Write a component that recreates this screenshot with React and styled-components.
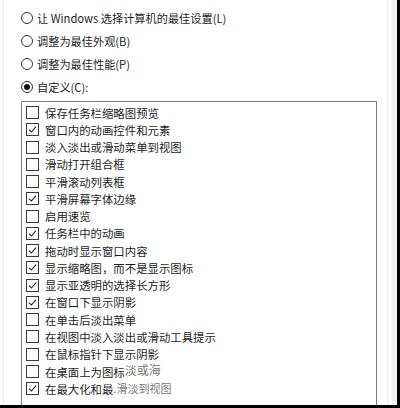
import React from 'react';
import styled, { createGlobalStyle } from 'styled-components';

const GlobalStyle = createGlobalStyle`
  html, body {
    margin: 0;
    padding: 0;
    background: #fff;
  }
  body {
    font-family: "Noto Sans CJK SC", "Noto Sans", sans-serif;
    color: #1e1e1e;
  }
`;

const Frame = styled.div`
  width: 400px;
  height: 408px;
  box-sizing: border-box;
  border-right: 3px solid #000;
  border-bottom: 3px solid #000;
  display: flex;
  overflow: hidden;
  background: #fff;
`;

const Panel = styled.div`
  flex: 1;
  margin-left: 3px;
  border-left: 1px solid #ececec;
  padding: 6px 0 0 17px;
  display: flex;
  flex-direction: column;
  min-width: 0;
`;

const EdgeStrip = styled.div`
  width: 9px;
  border-left: 1px solid #f0f0f0;
  background: linear-gradient(90deg, #f7f7f7 0, #fff 30%, #eeeeee 60%, #f6f6f6 100%);
`;

const RadioGroup = styled.div`
  display: flex;
  flex-direction: column;
`;

const RadioRow = styled.div`
  height: ${p => p.$h}px;
  display: flex;
  align-items: center;
  gap: 4px;
  font-size: 11.2px;
  white-space: nowrap;
`;

const RadioDot = styled.span`
  width: 10px;
  height: 10px;
  border: 1px solid #333;
  border-radius: 50%;
  display: flex;
  align-items: center;
  justify-content: center;
  flex-shrink: 0;

  &::after {
    content: '';
    width: 6px;
    height: 6px;
    border-radius: 50%;
    background: ${p => (p.$on ? '#111' : 'transparent')};
  }
`;

const ListBox = styled.div`
  margin-top: 2px;
  width: 356px;
  flex: 1;
  box-sizing: border-box;
  border: 1px solid #7f7f7f;
  border-bottom: none;
  padding: 2px 0 0 4px;
  display: flex;
  flex-direction: column;
`;

const Item = styled.div`
  height: 17.25px;
  display: flex;
  align-items: center;
  gap: 6px;
  font-size: 11.4px;
  white-space: nowrap;
`;

const Box = styled.span`
  width: 11px;
  height: 11px;
  border: 1px solid #3a3a3a;
  flex-shrink: 0;
  display: flex;
  align-items: center;
  justify-content: center;
`;

const Ghost = styled.span`
  color: #777;
  position: relative;
  top: ${p => p.$dy}px;
  font-size: ${p => p.$fs}px;
`;

const Check = () => (
  <svg width="9" height="9" viewBox="0 0 9 9">
    <path d="M1 4.6 L3.4 7 L8 1.6" fill="none" stroke="#222" strokeWidth="1.1" />
  </svg>
);

const radios = [
  { label: '让 Windows 选择计算机的最佳设置(L)', h: 24 },
  { label: '调整为最佳外观(B)', h: 22 },
  { label: '调整为最佳性能(P)', h: 23 },
  { label: '自定义(C):', h: 24, on: true },
];

const items = [
  { text: '保存任务栏缩略图预览' },
  { text: '窗口内的动画控件和元素', on: true },
  { text: '淡入淡出或滑动菜单到视图' },
  { text: '滑动打开组合框' },
  { text: '平滑滚动列表框' },
  { text: '平滑屏幕字体边缘', on: true },
  { text: '启用速览' },
  { text: '任务栏中的动画', on: true },
  { text: '拖动时显示窗口内容', on: true },
  { text: '显示缩略图，而不是显示图标', on: true },
  { text: '显示亚透明的选择长方形', on: true },
  { text: '在窗口下显示阴影', on: true },
  { text: '在单击后淡出菜单' },
  { text: '在视图中淡入淡出或滑动工具提示' },
  { text: '在鼠标指针下显示阴影' },
  { text: '在桌面上为图标', ghost: '淡或海', dy: -2, fs: 12 },
  { text: '在最大化和最', on: true, ghost: '.滑淡到视图', dy: -1, fs: 11 },
];

export default function App() {
  return (
    <>
      <GlobalStyle />
      <Frame>
        <Panel>
          <RadioGroup>
            {radios.map(r => (
              <RadioRow key={r.label} $h={r.h}>
                <RadioDot $on={r.on} />
                {r.label}
              </RadioRow>
            ))}
          </RadioGroup>
          <ListBox>
            {items.map(it => (
              <Item key={it.text}>
                <Box>{it.on && <Check />}</Box>
                <span>
                  {it.text}
                  {it.ghost && (
                    <Ghost $dy={it.dy} $fs={it.fs}>
                      {it.ghost}
                    </Ghost>
                  )}
                </span>
              </Item>
            ))}
          </ListBox>
        </Panel>
        <EdgeStrip />
      </Frame>
    </>
  );
}
